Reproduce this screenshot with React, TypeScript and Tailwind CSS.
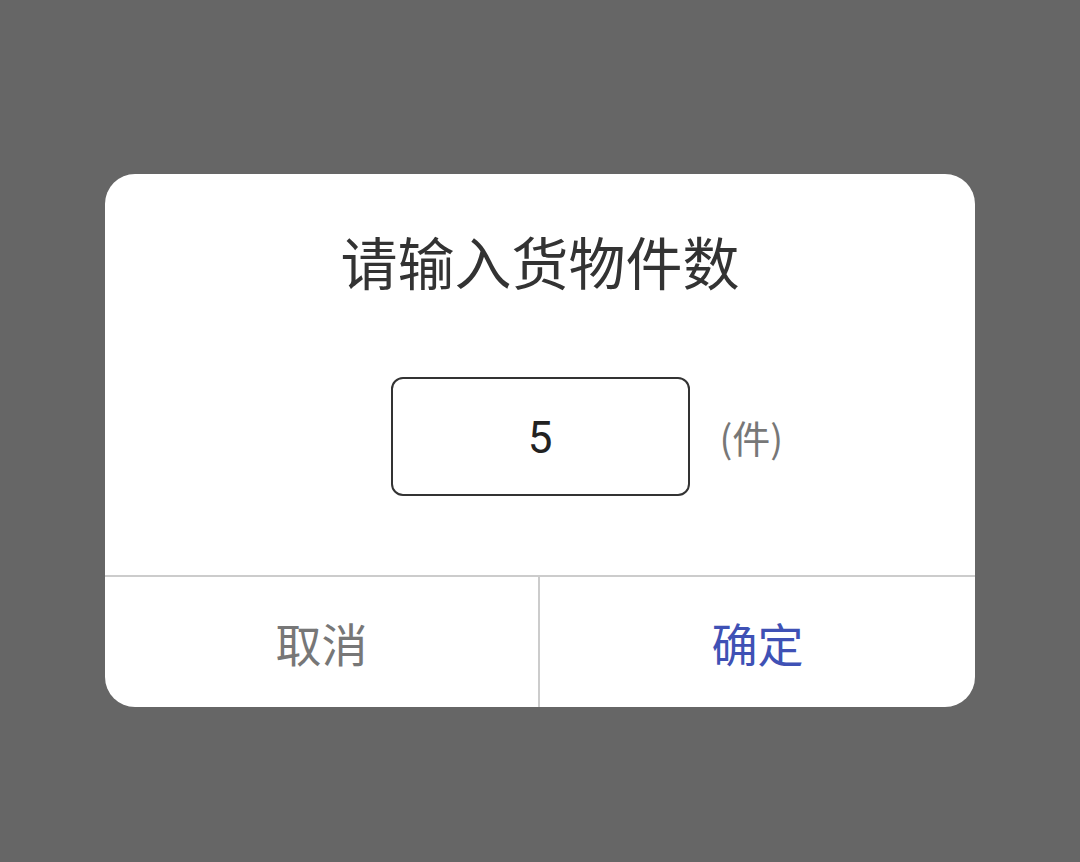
export default function App() {
  return (
    <div
      className="min-h-[862px] w-full bg-[#666666] pt-[174px]"
      style={{ fontFamily: '"Noto Sans CJK SC", "Noto Sans", sans-serif' }}
    >
      <div className="mx-auto w-[870px] overflow-hidden rounded-[30px] bg-white">
        <div className="pt-[58px] text-center text-[57px] leading-none text-[#333333]">
          请输入货物件数
        </div>

        <div className="mt-[88px] grid grid-cols-[1fr_auto_1fr] items-center">
          <div />
          <div className="flex h-[119px] w-[299px] items-center justify-center rounded-[12px] border-2 border-[#333333]">
            <span className="mt-[3px] font-['Roboto'] text-[44px] leading-none text-[#222222]">5</span>
          </div>
          <div className="pl-[30px] text-[38px] leading-none text-[#777777]">(件)</div>
        </div>

        <div className="mt-[79px] grid grid-cols-2 border-t-2 border-[#cccccc]">
          <button className="flex h-[130px] items-center justify-center border-r-2 border-[#cccccc] text-[46px] leading-none text-[#777777]">
            取消
          </button>
          <button className="flex h-[130px] items-center justify-center text-[46px] leading-none text-[#3f51b5]">
            确定
          </button>
        </div>
      </div>
    </div>
  );
}
